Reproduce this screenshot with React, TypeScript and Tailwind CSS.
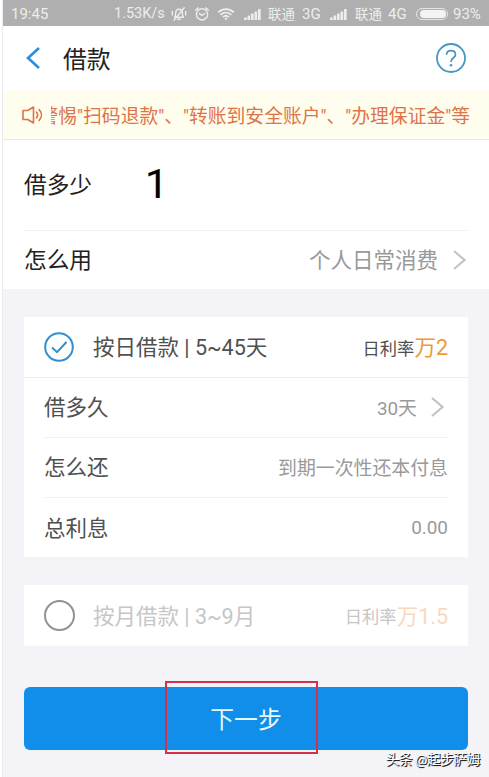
import type { ReactNode } from 'react';

function MuteIcon() {
  return (
    <svg className="h-4 w-4" viewBox="0 0 16 16" fill="none" stroke="currentColor" strokeWidth="1.4" strokeLinecap="round" strokeLinejoin="round">
      <path d="M3.500 11.200h9c-.9-.9-1.100-1.800-1.100-3.600C11.400 4.800 10.300 3.200 8 3.200S4.600 4.800 4.600 7.600c0 1.800-.2 2.700-1.100 3.600Z" />
      <path d="M6.700 13.300h2.600M13.200 1.800 3 14.200M1.300 5.500v3.600M14.700 5.500v3.600" />
    </svg>
  );
}

function AlarmIcon() {
  return (
    <svg className="h-4 w-4" viewBox="0 0 16 16" fill="none" stroke="currentColor" strokeWidth="1.4" strokeLinecap="round" strokeLinejoin="round">
      <circle cx="8" cy="8.400" r="5.600" />
      <path d="M5.400 7.500 8 9.400l2.600-1.900M1.700 4.100l2.500-2.200M14.300 4.100l-2.500-2.200" />
    </svg>
  );
}

function WifiIcon() {
  return (
    <svg className="h-4 w-[18px]" viewBox="0 0 18 16" fill="none" stroke="currentColor" strokeWidth="1.800">
      <path d="M1.200 6.300c4.500-4.300 11.100-4.300 15.600 0M3.600 8.800c3.200-3 7.600-3 10.800 0M6 11.200c1.800-1.700 4.200-1.700 6 0" />
      <path d="m9 14.200-1.700-1.700c1-.9 2.400-.9 3.400 0Z" fill="currentColor" stroke="none" />
    </svg>
  );
}

function SignalIcon() {
  return (
    <svg className="h-3 w-[17px]" viewBox="0 0 17 12" fill="currentColor">
      <path d="M0 9.500h2.700V12H0zM3.500 7.500h2.700V12H3.500zM7 5.500h2.700V12H7zM10.500 3.500h2.700V12h-2.700zM14 1h2.700v11H14z" />
    </svg>
  );
}

function SpeakerIcon() {
  return (
    <svg className="h-[18px] w-[21px]" viewBox="0 0 21 18" fill="none" stroke="currentColor" strokeWidth="1.600" strokeLinejoin="round" strokeLinecap="round">
      <path d="M1 4.500h4.700L11.500 1v16l-5.800-3.500H1z" />
      <path d="M14.400 6c1.500 1.800 1.500 4.200 0 6M17.200 3.600c2.900 3.200 2.900 7.600 0 10.800" />
    </svg>
  );
}

function ChevronIcon() {
  return (
    <svg className="h-5 w-[13px]" viewBox="0 0 13 20" fill="none" stroke="#c3c3c3" strokeWidth="2.200">
      <path d="m1 1 10.500 9L1 19" />
    </svg>
  );
}

function StatusBar() {
  return (
    <div className="flex h-[26px] items-center bg-[#afafaf] pt-px pl-2 text-[15px] leading-[26px] text-[#ededed]">
      <span className="w-[103px]">19:45</span>
      <span className="w-[57px] pt-px text-[14.500px]">1.53K/s</span>
      <div className="flex w-[73px] items-center gap-[7px]">
        <MuteIcon />
        <AlarmIcon />
        <WifiIcon />
      </div>
      <span className="w-6"><SignalIcon /></span>
      <span className="w-[34px] text-[13.500px]">联通</span>
      <span className="w-[28px]">3G</span>
      <span className="w-[25px]"><SignalIcon /></span>
      <span className="w-[33px] text-[13.500px]">联通</span>
      <span className="w-[28px]">4G</span>
      <span className="mr-[5px] h-3 w-8 rounded-full border border-[#e4e4e4] p-px">
        <span className="ml-0.5 block h-full rounded-full bg-[#f3f3f3]" />
      </span>
      <span className="text-[15px]">93%</span>
    </div>
  );
}

function DetailRow({ label, last, children }: { label: string; last?: boolean; children: ReactNode }) {
  return (
    <div className={`mx-5 flex h-[60px] items-center justify-between ${last ? '' : 'border-b border-[#f1f1f1]'}`}>
      <span className="pt-0.5 text-[21.500px] text-[#505050]">{label}</span>
      <span className="flex items-center text-[18.900px] text-[#999]">{children}</span>
    </div>
  );
}

export default function App() {
  return (
    <div className="h-[777px] w-[489px] overflow-hidden bg-white pl-[2px] font-[Roboto,'Noto_Sans_CJK_SC',sans-serif] whitespace-nowrap">
      <div className="flex h-full flex-col border-l border-[#ececf0] bg-[#f3f3f8]">
        <StatusBar />

        <header className="flex h-16 items-center bg-white pr-[23px] pl-[23px]">
          <svg className="h-[22px] w-[15px]" viewBox="0 0 15 22" fill="none" stroke="#2b8ddb" strokeWidth="2.600">
            <path d="M13 1 2 11l11 10" />
          </svg>
          <h1 className="ml-[22px] pt-1.5 text-[23.800px] text-[#222]">借款</h1>
          <svg className="ml-auto h-[30px] w-[30px]" viewBox="0 0 30 30" fill="none" stroke="#4596c5" strokeWidth="1.800">
            <circle cx="15" cy="15" r="14" />
            <path d="M10.500 11.700c.1-2.600 1.900-4.100 4.500-4.100 2.700 0 4.500 1.500 4.500 3.800 0 1.700-.9 2.600-2.400 3.700-1.500 1.100-2.100 1.900-2.100 4" />
            <circle cx="15" cy="22.300" r="1.300" fill="#4596c5" stroke="none" />
          </svg>
        </header>

        {/* scrolling notice, its head has already run under the speaker */}
        <div className="flex h-[50px] items-center border-b border-[#e9e9e6] bg-[#fffdee] pl-[19px] text-[#dd7447]">
          <SpeakerIcon />
          <div className="ml-2 flex w-[419px] justify-end overflow-hidden pt-[5px] text-[18.800px]">
            <span>警惕"扫码退款"、"转账到安全账户"、"办理保证金"等</span>
          </div>
        </div>

        <section className="bg-white px-[21px] text-[22.700px] text-[#222]">
          <div className="flex h-[91px] items-center border-b border-[#f1f1f1]">
            <span className="w-[121px] pt-0.5">借多少</span>
            <span className="-mt-0.5 text-[41px] leading-none text-black [-webkit-text-stroke:0.2px_black]">1</span>
          </div>
          <div className="flex h-[58px] items-center">
            <span className="pt-0.5">怎么用</span>
            <span className="mr-[15px] ml-auto pt-0.5 text-[21.500px] text-[#999]">个人日常消费</span>
            <span className="mr-[2px]"><ChevronIcon /></span>
          </div>
        </section>

        <section className="mx-[21px] mt-7 h-[240px] bg-white">
          <div className="flex h-[61px] items-center border-b border-[#eeeef1] px-5">
            <svg className="h-[30px] w-[30px]" viewBox="0 0 30 30" fill="none" stroke="#318fcf" strokeWidth="2">
              <circle cx="15" cy="15" r="13.800" />
              <path d="m8 15.500 5 4.700L22.500 10" />
            </svg>
            <span className="ml-[19px] pt-[3px] text-[21.500px] text-[#505050]">按日借款 | 5~45天</span>
            <span className="ml-auto pt-1.5 text-[17.300px] text-[#505050]">日利率</span>
            <span className="pt-[3px] text-[21.500px] text-[#ee9838]">万2</span>
          </div>
          <DetailRow label="借多久">
            <span className="mr-[14px] pt-[3px]">30天</span>
            <span className="mr-1"><ChevronIcon /></span>
          </DetailRow>
          <DetailRow label="怎么还"><span className="pt-1">到期一次性还本付息</span></DetailRow>
          <DetailRow label="总利息" last>0.00</DetailRow>
        </section>

        <section className="mx-[21px] mt-7 flex h-[61px] items-center bg-white px-5">
          <span className="h-[31px] w-[31px] rounded-full border-2 border-[#929292]" />
          <span className="ml-[18px] pt-[3px] text-[21.500px] text-[#c6c6c6]">按月借款 | 3~9月</span>
          <span className="ml-auto pt-[5px] text-[17.300px] text-[#c6c6c6]">日利率</span>
          <span className="pt-[3px] text-[21.500px] text-[#fad8bb]">万1.5</span>
        </section>

        <div className="relative mx-[21px] mt-[41px]">
          <button className="block h-[63px] w-full rounded-md bg-[#108eea] pt-1 text-[23.800px] text-[#e4f8ff]">下一步</button>
          <div className="absolute -top-1.5 left-[141px] h-[73px] w-[153px] border-2 border-[#d52f4c]" />
        </div>
        <p className="mr-[9px] text-right text-[13.500px] leading-[19px] tracking-[-0.3px] text-white [text-shadow:1px_1px_0_#222,0.5px_0.5px_1px_#444]">头条 @起步萨姆</p>
      </div>
    </div>
  );
}
